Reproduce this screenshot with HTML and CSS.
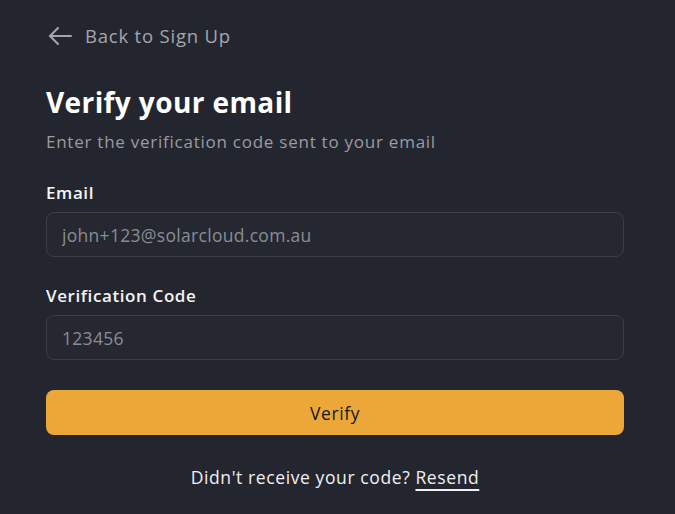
FILE: index.html
```html
<!DOCTYPE html>
<html lang="en">
<head>
<meta charset="utf-8">
<link rel="stylesheet" href="styles.css">
</head>
<body>
<main class="page">
  <a class="back" href="#">
    <svg class="back-icon" width="28" height="28" viewBox="0 0 28 28" fill="none" stroke="currentColor" stroke-width="2" stroke-linecap="round" stroke-linejoin="round"><path d="M25 14H4"/><path d="M12 6l-8 8 8 8"/></svg>
    <span>Back to Sign Up</span>
  </a>
  <h1 class="title">Verify your email</h1>
  <p class="subtitle">Enter the verification code sent to your email</p>
  <form class="form">
    <label class="field">
      <span class="label">Email</span>
      <input class="input" type="text" placeholder="john+123@solarcloud.com.au">
    </label>
    <label class="field field-second">
      <span class="label">Verification Code</span>
      <input class="input" type="text" placeholder="123456">
    </label>
    <button class="btn" type="button">Verify</button>
  </form>
  <p class="footer">Didn't receive your code? <a class="link" href="#">Resend</a></p>
</main>
</body>
</html>
```
FILE: styles.css
```css
* { box-sizing: border-box; }
html, body { margin: 0; padding: 0; }
body {
  background: #23262f;
  font-family: "Open Sans", "Liberation Sans", sans-serif;
  color: #f2f2f2;
  width: 675px;
  height: 514px;
  overflow: hidden;
}
.page {
  padding: 22px 51px 0 46px;
  display: flex;
  flex-direction: column;
}
.back {
  display: flex;
  align-items: center;
  gap: 11px;
  color: #a4a6ab;
  text-decoration: none;
  font-size: 18.5px;
  line-height: 28px;
  height: 28px;
  letter-spacing: 0.8px;
}
.back-icon { color: #a4a6ab; flex: none; }
.title {
  margin: 34px 0 0;
  font-size: 28px;
  line-height: 36px;
  font-weight: 700;
  color: #ffffff;
  letter-spacing: 0.4px;
}
.subtitle {
  margin: 10px 0 0;
  font-size: 17px;
  line-height: 24px;
  color: #9a9ca2;
  letter-spacing: 0.75px;
}
.form {
  display: flex;
  flex-direction: column;
  margin-top: 27px;
}
.field {
  display: flex;
  flex-direction: column;
  gap: 7px;
}
.field-second { margin-top: 27px; }
.label {
  font-size: 17px;
  line-height: 24px;
  font-weight: 600;
  color: #f4f4f4;
  letter-spacing: 0.6px;
}
.input {
  height: 45px;
  border: 1px solid #3b3e48;
  border-radius: 8px;
  background: #252830;
  padding: 0 15px;
  font-family: inherit;
  font-size: 17.5px;
  letter-spacing: 0.3px;
  color: #e0e0e0;
  outline: none;
}
.input::placeholder { color: #8a8d93; }
.btn {
  margin-top: 30px;
  height: 45px;
  border: none;
  border-radius: 8px;
  background: #eba838;
  color: #16171b;
  font-family: inherit;
  font-size: 17.5px;
  font-weight: 500;
  letter-spacing: 0.6px;
}
.footer {
  margin: 30px 0 0;
  text-align: center;
  font-size: 17.5px;
  line-height: 24px;
  color: #f0f0f0;
  letter-spacing: 0.6px;
}
.link {
  color: #f0f0f0;
  text-decoration: underline;
  text-decoration-thickness: 1.5px;
  text-underline-offset: 5px;
}
```
